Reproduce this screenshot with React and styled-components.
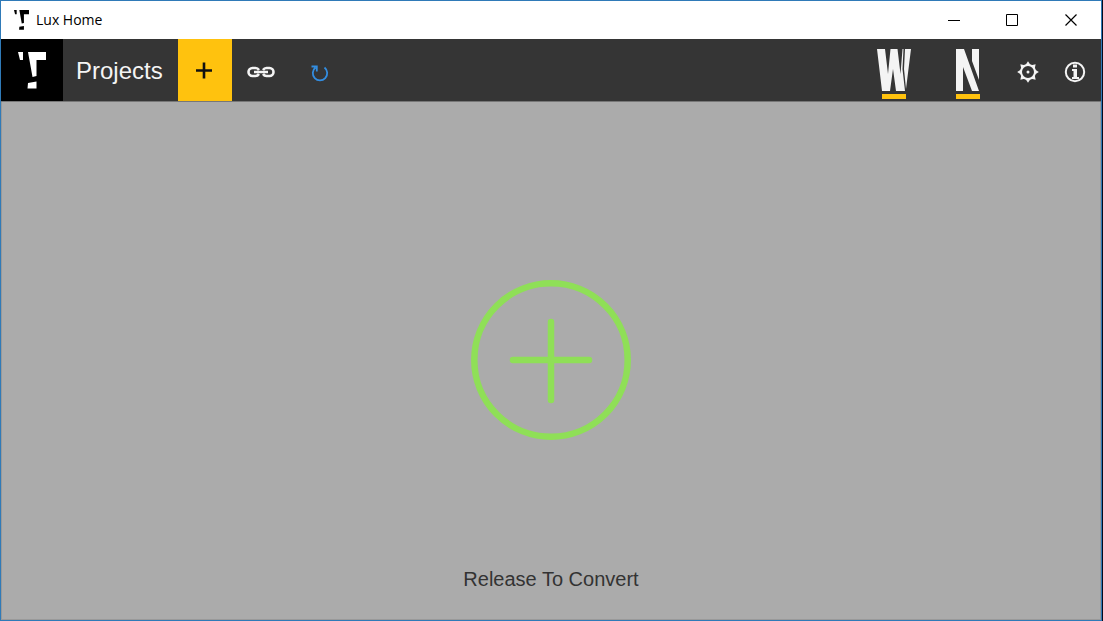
import React from "react";
import styled, { createGlobalStyle } from "styled-components";

const Global = createGlobalStyle`
  *, *::before, *::after { box-sizing: border-box; }
  html, body, #root { height: 100%; }
  body { margin: 0; background: #050a1c; font-family: "Liberation Sans", Arial, sans-serif; }
`;

const Window = styled.div`
  display: flex;
  flex-direction: column;
  min-height: 100%;
  margin-right: 1px;
  border: 1px solid #2f7ab8;
`;

const TitleBar = styled.header`
  display: flex;
  align-items: center;
  height: 38px;
  padding-left: 13px;
  background: #fff;
`;

const Title = styled.h1`
  flex: 1;
  margin: 0 0 0 7px;
  font: 400 14px/20px "Open Sans", "Noto Sans", sans-serif;
  color: #000;
`;

const IconButton = styled.button`
  display: flex;
  align-items: center;
  justify-content: center;
  flex: none;
  width: ${(p) => p.$width}px;
  align-self: stretch;
  margin: 0;
  padding: ${(p) => p.$padTop || 0}px 0 0;
  border: 0;
  background: ${(p) => p.$fill || "transparent"};
  color: ${(p) => p.$ink || "#f4f4f4"};
`;

const Toolbar = styled.nav`
  display: flex;
  align-items: stretch;
  height: 63px;
  padding-right: 2px;
  background: #353535;
  border-bottom: 1px solid #777;
`;

const Brand = styled.div`
  display: flex;
  align-items: center;
  justify-content: center;
  width: 62px;
  background: #000;
  color: #fff;
`;

const ProjectsLink = styled.a`
  display: flex;
  align-items: center;
  padding: 2px 15px 0 13px;
  font-size: 24px;
  line-height: 28px;
  color: #f4f4f4;
  text-decoration: none;
`;

const Spacer = styled.div`
  flex: 1;
`;

const DropZone = styled.main`
  display: flex;
  flex: 1;
  flex-direction: column;
  align-items: center;
  justify-content: flex-end;
  gap: 128px;
  padding-bottom: 29px;
  background: #ababab;
  border: 1px solid #999;
  border-top: 0;
`;

const DropText = styled.p`
  margin: 0;
  font-size: 20px;
  line-height: 22px;
  color: #333;
`;

const Svg = styled.svg`
  display: block;
  flex: none;
`;

const LuxMark = ({ width, height }) => (
  <Svg width={width} height={height} viewBox="0 0 28 37" preserveAspectRatio="none" fill="currentColor" aria-hidden="true">
    <path d="M0 0H5V8H2ZM10 0H28V8H18.500V24L14.500 25ZM10 31L18.500 29.500V36.500H9.500Z" />
  </Svg>
);

export default function App() {
  return (
    <>
      <Global />
      <Window>
        <TitleBar>
          <LuxMark width={15} height={20} />
          <Title>Lux Home</Title>
          <IconButton $width={58} $ink="#000" aria-label="Minimize">
            <Svg width="12" height="12"><path d="M0 6.500H12" stroke="currentColor" /></Svg>
          </IconButton>
          <IconButton $width={58} $ink="#000" aria-label="Maximize">
            <Svg width="12" height="12"><path d="M.5.5H11.5V11.5H.5Z" fill="none" stroke="currentColor" /></Svg>
          </IconButton>
          <IconButton $width={60} $ink="#000" aria-label="Close">
            <Svg width="12" height="12"><path d="M.5.5L11.5 11.5M11.5.5L.5 11.5" stroke="currentColor" strokeWidth="1.200" /></Svg>
          </IconButton>
        </TitleBar>
        <Toolbar>
          <Brand><LuxMark width={28} height={37} /></Brand>
          <ProjectsLink href="#projects">Projects</ProjectsLink>
          <IconButton $width={54} $fill="#ffc20e" $ink="#111" aria-label="Add project">
            <Svg width="18" height="18"><path d="M0 9.500H16M8 1.500V17.500" stroke="currentColor" strokeWidth="2.600" /></Svg>
          </IconButton>
          <IconButton $width={58} $padTop={3} aria-label="Link project">
            <Svg width="28" height="12" viewBox="0 0 28 12" fill="none" stroke="currentColor" strokeWidth="2.600">
              <path d="M12 4C11 2.500 10 2 8.500 2H5.500A4 4 0 0 0 5.500 10H8.500C10 10 11 9.500 12 8M16 4C17 2.500 18 2 19.500 2H22.500A4 4 0 0 1 22.500 10H19.500C18 10 17 9.500 16 8M7 6H21" />
            </Svg>
          </IconButton>
          <IconButton $width={60} $padTop={5} $ink="#338de0" aria-label="Refresh">
            <Svg width="18" height="18" viewBox="0 0 18 18" fill="none" stroke="currentColor" strokeWidth="1.800">
              <path d="M13.500 3.500A7.200 7.200 0 1 1 4.500 3.500M0.500 2.500H5.800V7.500" />
            </Svg>
          </IconButton>
          <Spacer />
          <IconButton $width={74} $padTop={10} aria-label="W">
            <Svg width="34" height="52" viewBox="0 0 34 52" fill="currentColor">
              <path d="M0 0H8L11 25L13.500 0H20.500L23.500 25L25.500 0H26.500L25.500 20L28 42H19L16 20L13 42H5ZM28 0H34L29 40L27 20Z" />
              <path d="M5 45H29V50H5Z" fill="#ffc20e" />
            </Svg>
          </IconButton>
          <IconButton $width={74} $padTop={10} aria-label="N">
            <Svg width="26" height="52" viewBox="0 0 26 52" fill="currentColor">
              <path d="M1 0H9L24 42H17L8 18V42H1ZM17 0H24V31L17 12Z" />
              <path d="M1 45H25V50H1Z" fill="#ffc20e" />
            </Svg>
          </IconButton>
          <IconButton $width={46} $padTop={3} aria-label="Settings">
            <Svg width="22" height="22" viewBox="-11 -11 22 22" fill="none" stroke="currentColor" strokeWidth="2">
              <circle r="7" />
              <circle r="1.500" fill="currentColor" stroke="none" />
              {[0, 45, 90, 135, 180, 225, 270, 315].map((a) => (
                <path key={a} d="M-2.500-7L0-10.800L2.500-7Z" fill="currentColor" stroke="none" transform={`rotate(${a})`} />
              ))}
            </Svg>
          </IconButton>
          <IconButton $width={48} $padTop={3} aria-label="About">
            <Svg width="22" height="22" viewBox="0 0 22 22" fill="none" stroke="currentColor" strokeWidth="2">
              <circle cx="11" cy="11" r="9.200" />
              <path d="M9 3.500H13V6.500H9ZM8 8H13V16H15V18H8V16H9.500V10H8Z" fill="currentColor" stroke="none" />
            </Svg>
          </IconButton>
        </Toolbar>
        <DropZone>
          <Svg width="160" height="160" viewBox="0 0 160 160" fill="none" stroke="#8fdf57" strokeWidth="6.500">
            <circle cx="80" cy="80" r="76.700" />
            <path d="M42 80H118M80 42V120" strokeLinecap="round" />
          </Svg>
          <DropText>Release To Convert</DropText>
        </DropZone>
      </Window>
    </>
  );
}
